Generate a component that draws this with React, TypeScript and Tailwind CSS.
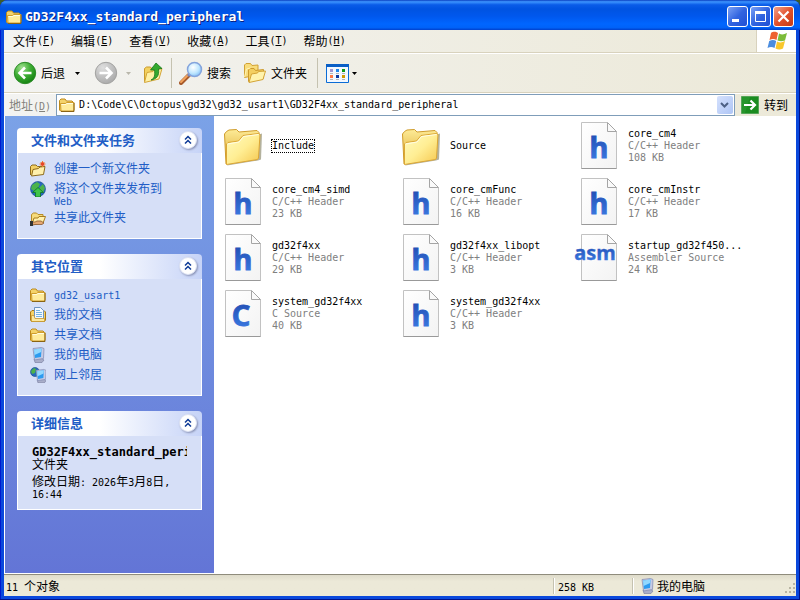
import React, { useState } from 'react';

// Latin runs are set in a 6px wide mono face next to 12px hanzi
const Mixed = ({ text }: { text: string }) => (
  <>
    {text.split(/([\x20-\x7e]+)/).map((part, i) =>
      /^[\x20-\x7e]+$/.test(part) ? (
        <span key={i} className="font-['DejaVu_Sans_Mono',monospace] text-[10px] leading-[0]">{part}</span>
      ) : (
        part
      )
    )}
  </>
);

const SmallFolder = () => (
  <svg viewBox="0 0 16 16" className="h-4 w-4 shrink-0">
    <path d="M.5 13V3.5L2 2h4l1.5 2H13l1.5 1.5V13l-1 1h-12z" fill="#f4d36b" stroke="#bd8a1c" />
    <path d="M1.5 6.5h5l1-1h7.5v7.5l-1 1H2z" fill="#ffec9c" stroke="#cf9d2c" />
    <path d="M2.5 7.5h4.5l1-1h6" stroke="#fffce0" fill="none" />
    <path d="M2 14.5h13V6" stroke="#8a6414" fill="none" />
  </svg>
);

const OpenFolder = () => (
  <>
    <path d="M1.5 13V4.5l2-1.5h3l1.5 1.5h5V8" fill="#f6db7c" stroke="#b68b25" />
    <path d="M2 14.5L4 8h4l1-1.5h6.5L13 13z" fill="#fff0ad" stroke="#a87c1d" />
  </>
);

const NewFolder = () => (
  <svg viewBox="0 0 16 16" className="h-4 w-4 shrink-0">
    <path d="M.5 14V5.500L2 4h4l1.500 1.500h5.500V9" fill="#f3d064" stroke="#8d6a1c" />
    <path d="M1.500 15L3 8.500l5.500-1 1.500-1.500 5-.5-1.500 8z" fill="#fff0ad" stroke="#8d6a1c" />
    <path d="M12.5 0v6M9.5 3h6M10.5 1l4 4M14.5 1l-4 4" stroke="#f08030" />
    <circle cx="12.5" cy="3" r="1.8" fill="#e8452a" />
  </svg>
);

const ShareFolder = () => (
  <svg viewBox="0 0 16 16" className="h-4 w-4 shrink-0">
    <OpenFolder />
    <path d="M1 12h4l2-1h4l3 2-2 1.500H5l-4 1z" fill="#e5a873" stroke="#7d4a20" strokeWidth=".7" />
    <path d="M0 11h3v5H0z" fill="#333" />
  </svg>
);

const Globe = ({ r = 7.5 }: { r?: number }) => (
  <>
    <circle cx={r + 0.5} cy={r + 0.5} r={r} fill="#2768bd" stroke="#174c86" strokeWidth=".6" />
    <path d={r > 6 ? 'M2 4l5-3 3 2-2 4-4 3-3-2zM9 7l4-4 2 4-2 5-3-2z' : 'M1 4l3-3 2 1-1 4-3 1zM6 5l3-2v4l-2 2z'} fill="#4cb34a" />
  </>
);

const PublishIcon = () => (
  <svg viewBox="0 0 16 16" className="h-4 w-4 shrink-0">
    <Globe />
    <path d="M8 6.500l5.500 5h-3V16h-5v-4.500h-3z" fill="#3fc447" stroke="#0d7422" strokeWidth=".8" />
  </svg>
);

const DocsIcon = () => (
  <svg viewBox="0 0 16 16" className="h-4 w-4 shrink-0">
    <path d="M.5 13V5L2 3.500h12l1.500 1.500v8l-1 1.500h-13z" fill="#f6d264" stroke="#a97a18" />
    <path d="M4.500.5h6l3 3V12h-9z" fill="#f4f9ff" stroke="#6b93c4" />
    <path d="M6 3.500h4M6 5.500h6M6 7.500h6M6 9.500h6" stroke="#75b4e4" />
    <path d="M1.500 8.500h2.500l1 3h9.500v3h-13z" fill="#fde9a0" stroke="#c3922a" strokeWidth=".7" />
  </svg>
);

const Monitor = () => (
  <>
    <path d="M4 12l7-1 3 2-2 2.500H5z" fill="#a9aec9" stroke="#72789b" strokeWidth=".6" />
    <path d="M3 1.500L11.500.5l2.500 1-.5 10L4.500 13z" fill="#c5cbe5" stroke="#7e87b0" strokeWidth=".7" />
    <path d="M4 2.500l7.500-1-.5 8.500-6 1z" fill="#2c9bf0" />
    <path d="M4 2.500l7.500-1-.3 3.500L4.500 8z" fill="#92d8ff" />
  </>
);

const ComputerIcon = () => (
  <svg viewBox="0 0 16 16" className="h-4 w-4 shrink-0"><Monitor /></svg>
);

const NetworkIcon = () => (
  <svg viewBox="0 0 16 16" className="h-4 w-4 shrink-0">
    <Globe r={4.5} />
    <g transform="translate(3.500 2) scale(.9)"><Monitor /></g>
  </svg>
);

const LargeFolder = () => (
  <svg viewBox="0 0 48 48" className="h-12 w-12 shrink-0">
    <defs>
      <linearGradient id="folderFront" x1="0" y1="0" x2="1" y2="1">
        <stop offset="0" stopColor="#fffbc0" />
        <stop offset=".5" stopColor="#ffee94" />
        <stop offset="1" stopColor="#f5c64c" />
      </linearGradient>
      <linearGradient id="folderBack" x1="0" y1="0" x2="0" y2="1">
        <stop offset="0" stopColor="#fdeb97" />
        <stop offset="1" stopColor="#dba528" />
      </linearGradient>
    </defs>
    <path d="M8 43.500l31-5 3-1 1-26-3 1z" fill="#77724f" opacity=".55" />
    <path d="M7 42L5.500 12l2-2.500L10 8l7.500-.5L20 10l18-1.500 2 2V20z" fill="url(#folderBack)" stroke="#cf9c2c" />
    <path d="M7.500 42.500V22l1.500-1.500 10.500-1.500 4.500-5.500 15.500-2 1.500 1L39.500 36l-1 1.500z" fill="url(#folderFront)" stroke="#dca734" />
    <path d="M8.500 22l11.500-2 4.500-5.500 15-2" fill="none" stroke="#fffde4" />
  </svg>
);

const PageIcon = ({ letter }: { letter: string }) => (
  <svg viewBox="0 0 48 48" className="h-12 w-12 shrink-0 overflow-visible">
    <defs>
      <linearGradient id="page" x1="0" y1="0" x2="1" y2="1">
        <stop offset="0" stopColor="#fff" />
        <stop offset="1" stopColor="#f3f3f3" />
      </linearGradient>
      <linearGradient id="letter" x1="0" y1="0" x2="0" y2="1">
        <stop offset="0" stopColor="#1c43a8" />
        <stop offset="1" stopColor="#3f82ea" />
      </linearGradient>
    </defs>
    <path d="M6.500.5H32l9.500 9.500v36.500h-35z" fill="url(#page)" stroke="#c2c2c2" />
    <path d="M6.500 46.500h35" stroke="#999" />
    <path d="M32.500.5v9h9z" fill="#fafafa" stroke="#a5a5a5" />
    <text
      x={letter === 'asm' ? 20 : letter === 'h' ? 24 : 22}
      y={letter === 'asm' ? 26 : 36}
      textAnchor="middle"
      fill="url(#letter)"
      stroke="url(#letter)"
      strokeWidth={letter === 'asm' ? 0.3 : 0.8}
      className={letter === 'asm' ? "font-['Noto_Sans',sans-serif] text-[20px] font-bold" : "font-['Noto_Sans',sans-serif] text-[29px] font-bold"}
    >
      {letter}
    </text>
  </svg>
);

const BackIcon = ({ off }: { off?: boolean }) => (
  <svg viewBox="0 0 24 24" className="h-6 w-6 shrink-0">
    <defs>
      <radialGradient id="backOn" cx=".35" cy=".25" r=".8">
        <stop offset="0" stopColor="#9fe08e" />
        <stop offset=".5" stopColor="#3fae35" />
        <stop offset="1" stopColor="#12800f" />
      </radialGradient>
      <radialGradient id="backOff" cx=".35" cy=".25" r=".8">
        <stop offset="0" stopColor="#dedede" />
        <stop offset="1" stopColor="#a9a9a9" />
      </radialGradient>
    </defs>
    <circle cx="12" cy="12" r="10.7" fill={off ? 'url(#backOff)' : 'url(#backOn)'} stroke={off ? '#a2a2a0' : '#2b8a26'} />
    <path
      d={off ? 'M5.500 12H17M12 6.500l5.500 5.500-5.500 5.500' : 'M18.500 12H7M12 6.500L6.500 12l5.500 5.500'}
      fill="none"
      stroke="#fff"
      strokeWidth="2.600"
    />
  </svg>
);

const UpIcon = () => (
  <svg viewBox="0 0 20 24" className="h-6 w-5 shrink-0">
    <path d="M1.500 20.500V7.500l2-1.500h4l1.500 2 7-1v10z" fill="#f3d15f" stroke="#c99b2d" />
    <path d="M1.500 21.500l2.500-10 6-1 1-2 8-1-3 10.500z" fill="#fff1a5" stroke="#d4a63a" />
    <path d="M8 19c4-2 4-5 3.500-10H7.500L13 2l6 5.500-3.500.5c1 7-2 10-7.500 11z" fill="#34a92f" stroke="#16771a" strokeWidth=".8" />
  </svg>
);

const SearchIcon = () => (
  <svg viewBox="0 0 24 24" className="h-6 w-6 shrink-0">
    <defs>
      <radialGradient id="lens" cx=".4" cy=".35" r=".7">
        <stop offset="0" stopColor="#fff" />
        <stop offset=".6" stopColor="#bfe7ff" />
        <stop offset="1" stopColor="#7dbdf5" />
      </radialGradient>
    </defs>
    <path d="M2 22l8-8" stroke="#a65a2b" strokeWidth="4" strokeLinecap="round" />
    <path d="M2 21l7-7" stroke="#f2a35e" strokeWidth="2" strokeLinecap="round" />
    <path d="M9 15l2-2" stroke="#7a87b8" strokeWidth="3" />
    <circle cx="15.500" cy="8.500" r="7" fill="url(#lens)" stroke="#85a4dc" strokeWidth="1.500" />
  </svg>
);

const FoldersIcon = () => (
  <svg viewBox="0 0 24 24" className="h-6 w-6 shrink-0">
    <path d="M1.500 16.500V4l1.500-1.500h4.500l1.500 2 6-.5v10z" fill="#f8dc7c" stroke="#d2a235" />
    <path d="M5.500 20.500V9L7 7.500h4l1.500 2 8-1v9z" fill="#f3cf60" stroke="#cd9a2d" />
    <path d="M6 21.500l2.500-8.500 6-1 1-1.500 7-.5-2.500 8.500z" fill="#fff3ac" stroke="#d4a436" />
    <path d="M1.500 16l2-8 4-1" fill="none" stroke="#fff4b6" />
  </svg>
);

const ViewsIcon = () => (
  <svg viewBox="0 0 23 19" className="h-[19px] w-[23px] shrink-0">
    <path d="M.5.5h22v18H.5z" fill="#f3f8ff" stroke="#0a6cd6" />
    <path d="M0 0h23v3H0z" fill="#0a5fc6" />
    <path d="M4 5h3v3H4z" fill="#a096d0" />
    <path d="M10 5h3v3h-3z" fill="#1d86ea" />
    <path d="M16 5h3v3h-3z" fill="#109a18" />
    <path d="M4 11h3v3H4z" fill="#ff7844" />
    <path d="M10 11h3v3h-3z" fill="#0a379e" />
    <path d="M16 11h3v3h-3z" fill="#d29a00" />
    <path d="M4 9.500h3m3 0h3m3 0h3M4 15.500h3m3 0h3m3 0h3" stroke="#b3b3b8" />
  </svg>
);

const FlagIcon = () => (
  <svg viewBox="0 0 20 20" className="h-5 w-5">
    <path d="M4 2c3-2 5-1 7 0L9.500 9c-2-1-4-1.500-7 0z" fill="#ee6030" />
    <path d="M12 2.500c3 1.500 5 1 8-.5l-2 7.500c-3 1-5 1-7.500 0z" fill="#7cbc3a" />
    <path d="M2.200 10c3-1.500 5-1 7 0L7.500 17c-2-1-4-1.500-7 0z" fill="#4b8de0" />
    <path d="M10 10.500c3 1.500 5 1 8-.5l-2 7.500c-3 1.500-5 1-7.500 0z" fill="#f9c72c" />
  </svg>
);

const DownArrow = ({ className }: { className: string }) => (
  <svg viewBox="0 0 5 3" className={`h-[3px] w-[5px] shrink-0 ${className}`}>
    <path d="M0 0h5L2.500 3z" fill="currentColor" />
  </svg>
);

const Separator = () => <div className="my-1 w-px self-stretch bg-[#c5c2b0]" />;

type PanelProps = { title: string; children: React.ReactNode };

const Panel = ({ title, children }: PanelProps) => {
  const [open, setOpen] = useState(true);
  return (
    <section>
      <div className="flex h-[25px] items-center justify-between rounded-t-[4px] bg-linear-to-r from-white from-45% to-[#c6d3f7] pr-[5px] pb-0.5 pl-3.5">
        <h2 className="text-[13px] font-bold text-[#215dc6]">{title}</h2>
        <button
          type="button"
          aria-label={title}
          onClick={() => setOpen(!open)}
          className="flex h-[18px] w-[18px] items-center justify-center rounded-full border border-[#dbe1f3] bg-white shadow-[1px_1px_2px_#8a93b5]"
        >
          <svg viewBox="0 0 8 10" className="h-2.5 w-2">
            <path d="M1 4.500l3-3 3 3M1 8.500l3-3 3 3" fill="none" stroke="#0e3a96" strokeWidth="1.500" />
          </svg>
        </button>
      </div>
      {open && <div className="border border-t-0 border-white bg-[#d6dff7]">{children}</div>}
    </section>
  );
};

type Link = { label: string; icon: React.ReactNode };

const LinkList = ({ links }: { links: Link[] }) => (
  <ul className="flex flex-col gap-1 px-3 pt-2 pb-3">
    {links.map(({ label, icon }) => (
      <li key={label}>
        <a href="#" className="flex min-h-4 items-start gap-2 text-[#215dc6]">
          <span className="h-4">{icon}</span>
          <span className="max-w-[110px] pt-px leading-3">
            <Mixed text={label} />
          </span>
        </a>
      </li>
    ))}
  </ul>
);

const menus = [
  ['文件', 'F'],
  ['编辑', 'E'],
  ['查看', 'V'],
  ['收藏', 'A'],
  ['工具', 'T'],
  ['帮助', 'H'],
];

const tasks: Link[] = [
  { label: '创建一个新文件夹', icon: <NewFolder /> },
  { label: '将这个文件夹发布到 Web', icon: <PublishIcon /> },
  { label: '共享此文件夹', icon: <ShareFolder /> },
];

const places: Link[] = [
  { label: 'gd32_usart1', icon: <SmallFolder /> },
  { label: '我的文档', icon: <DocsIcon /> },
  { label: '共享文档', icon: <SmallFolder /> },
  { label: '我的电脑', icon: <ComputerIcon /> },
  { label: '网上邻居', icon: <NetworkIcon /> },
];

const files = [
  { name: 'Include' },
  { name: 'Source' },
  { name: 'core_cm4', icon: 'h', type: 'C/C++ Header', size: '108 KB' },
  { name: 'core_cm4_simd', icon: 'h', type: 'C/C++ Header', size: '23 KB' },
  { name: 'core_cmFunc', icon: 'h', type: 'C/C++ Header', size: '16 KB' },
  { name: 'core_cmInstr', icon: 'h', type: 'C/C++ Header', size: '17 KB' },
  { name: 'gd32f4xx', icon: 'h', type: 'C/C++ Header', size: '29 KB' },
  { name: 'gd32f4xx_libopt', icon: 'h', type: 'C/C++ Header', size: '3 KB' },
  { name: 'startup_gd32f450...', icon: 'asm', type: 'Assembler Source', size: '24 KB' },
  { name: 'system_gd32f4xx', icon: 'C', type: 'C Source', size: '40 KB' },
  { name: 'system_gd32f4xx', icon: 'h', type: 'C/C++ Header', size: '3 KB' },
];

const TitleBar = () => (
  <header className="flex h-[30px] items-center bg-[linear-gradient(#0a3fc0_0%,#3d95ff_6%,#0a5ce8_16%,#0053e1_30%,#0058ee_55%,#0066ff_80%,#0062f8_92%,#0040cc_100%)] pt-[3px] pr-1.5 pl-1.5">
    <SmallFolder />
    <h1 className="ml-[3px] flex-1 truncate font-['DejaVu_Sans_Mono',monospace] text-[13px] font-bold text-white [text-shadow:1px_1px_#0a1f80]">
      GD32F4xx_standard_peripheral
    </h1>
    <div className="flex gap-0.5">
      <button type="button" aria-label="最小化" className="h-[21px] w-[21px] rounded-[3px] border border-white bg-linear-to-br from-[#7ba0f5] via-[#3264e0] to-[#1f4fd4]">
        <svg viewBox="0 0 19 19"><path d="M4 12h7v3H4z" fill="#fff" /></svg>
      </button>
      <button type="button" aria-label="最大化" className="h-[21px] w-[21px] rounded-[3px] border border-white bg-linear-to-br from-[#7ba0f5] via-[#3264e0] to-[#1f4fd4]">
        <svg viewBox="0 0 19 19"><path d="M4.500 5.500h10v9h-10z" fill="none" stroke="#fff" /><path d="M4 4h11v3H4z" fill="#fff" /></svg>
      </button>
      <button type="button" aria-label="关闭" className="h-[21px] w-[21px] rounded-[3px] border border-white bg-linear-to-br from-[#f0a088] via-[#e2512c] to-[#c63a14]">
        <svg viewBox="0 0 19 19"><path d="M4.500 4.500l10 10M14.500 4.500l-10 10" stroke="#fff" strokeWidth="2.200" /></svg>
      </button>
    </div>
  </header>
);

const App = () => {
  const [address, setAddress] = useState('D:\\Code\\C\\Octopus\\gd32\\gd32_usart1\\GD32F4xx_standard_peripheral');

  return (
    <div className="min-h-screen bg-[#3d5c2c]">
      <div className="flex min-h-screen flex-col overflow-hidden rounded-t-lg bg-[#0a48dc] font-['Noto_Sans_CJK_SC',sans-serif] text-xs text-black shadow-[inset_-1px_-1px_#00138c,inset_1px_0_#0019cf]">
        <TitleBar />
        <div className="mx-1 mb-1 flex flex-1 flex-col bg-[#ece9d8]">
          <div className="bg-linear-to-r from-[#f3f3f1] to-[#ece9d8]">
            <nav className="flex h-[23px] border-b border-[#d8d2bd] pl-px">
              {menus.map(([label, key]) => (
                <button key={key} type="button" className="flex items-center px-2">
                  {label}
                  <span className="font-['DejaVu_Sans_Mono',monospace] text-[10px]">
                    (<u>{key}</u>)
                  </span>
                </button>
              ))}
              <div className="ml-auto flex w-10 items-center justify-center border-l border-[#d8d2bd] bg-white">
                <FlagIcon />
              </div>
            </nav>

            <div className="flex h-10 items-center border-t border-b border-t-white border-b-[#d8d2bd] pl-[9px]">
              <button type="button" className="flex items-center gap-1">
                <BackIcon />
                后退
              </button>
              <DownArrow className="mr-3.5 ml-2.5" />
              <button type="button" aria-label="前进" disabled>
                <BackIcon off />
              </button>
              <DownArrow className="mr-3 ml-2 text-[#b9b7ab]" />
              <button type="button" aria-label="向上" className="mr-2">
                <UpIcon />
              </button>
              <Separator />
              <button type="button" className="ml-[7px] flex items-center gap-1">
                <SearchIcon />
                搜索
              </button>
              <button type="button" className="mr-2.5 ml-3 flex items-center gap-1">
                <FoldersIcon />
                文件夹
              </button>
              <Separator />
              <button type="button" aria-label="查看" className="ml-2 flex items-center gap-[3px]">
                <ViewsIcon />
                <DownArrow className="" />
              </button>
            </div>

            <div className="flex h-[23px] items-center border-t border-white pl-[5px]">
              <label htmlFor="address" className="mr-[5px] text-[#83827b]">
                地址
                <span className="font-['DejaVu_Sans_Mono',monospace] text-[10px]">
                  (<u>D</u>)
                </span>
              </label>
              <div className="flex h-[22px] flex-1 items-center border border-[#7f9db9] bg-white pl-0.5">
                <SmallFolder />
                <input
                  id="address"
                  value={address}
                  onChange={(e) => setAddress(e.target.value)}
                  className="ml-1 min-w-0 flex-1 font-['DejaVu_Sans_Mono',monospace] text-[10px] outline-none"
                />
                <button type="button" aria-label="地址列表" className="mr-px flex h-[18px] w-4 items-center justify-center rounded-[2px] bg-linear-to-br from-[#d5e1fd] to-[#aec5f5]">
                  <svg viewBox="0 0 9 6" className="h-1.5 w-[9px]">
                    <path d="M1 1l3.500 3.500L8 1" fill="none" stroke="#4d6185" strokeWidth="2" />
                  </svg>
                </button>
              </div>
              <button type="button" className="mr-2 ml-1.5 flex items-center gap-[5px]">
                <svg viewBox="0 0 18 18" className="h-[18px] w-[18px]">
                  <path d="M.5.5h17v17H.5z" fill="#26952b" stroke="#54a457" />
                  <path d="M9 1h8v16H4z" fill="#108315" opacity=".5" />
                  <path d="M3 9h11M9.500 4.500L14 9l-4.500 4.500" fill="none" stroke="#fff" strokeWidth="2.200" />
                </svg>
                转到
              </button>
            </div>
          </div>

          <div className="flex flex-1 border-b border-l border-white bg-white">
            <aside className="flex w-[209px] shrink-0 flex-col gap-[15px] bg-linear-to-b from-[#7ba2e7] to-[#6375d6] px-3 py-3">
              <Panel title="文件和文件夹任务">
                <LinkList links={tasks} />
              </Panel>
              <Panel title="其它位置">
                <LinkList links={places} />
              </Panel>
              <Panel title="详细信息">
                <div className="px-3.5 pt-2.5 pb-2.5 leading-3">
                  <p className="overflow-x-clip font-['DejaVu_Sans_Mono',monospace] font-bold">GD32F4xx_standard_peripheral</p>
                  <p>文件夹</p>
                  <p className="mt-[5px]">
                    <Mixed text="修改日期: 2026年3月8日, 16:44" />
                  </p>
                </div>
              </Panel>
            </aside>

            <main className="grid flex-1 grid-cols-[repeat(auto-fill,178px)] content-start pt-0.5 pl-[5px]">
              {files.map((file, i) => (
                <button key={i} type="button" className="flex h-14 items-center gap-[5px] text-left font-['DejaVu_Sans_Mono',monospace] text-[10px] leading-3">
                  {file.icon ? <PageIcon letter={file.icon} /> : <LargeFolder />}
                  <span className="flex flex-col items-start whitespace-nowrap">
                    <span className={i === 0 ? 'outline-1 outline-black outline-dotted' : ''}>{file.name}</span>
                    {file.type && <span className="text-[#808080]">{file.type}</span>}
                    {file.size && <span className="text-[#808080]">{file.size}</span>}
                  </span>
                </button>
              ))}
            </main>
          </div>

          <footer className="flex h-[22px] items-center border-t border-[#8f8c7c] bg-linear-to-b from-[#dedbca] to-[#ece9d8] to-30%">
            <div className="flex-1 pl-0.5">
              <Mixed text="11 个对象" />
            </div>
            <div className="w-[79px] border-l border-[#c5c2b0] pl-1 shadow-[inset_1px_0_#fff]">
              <Mixed text="258 KB" />
            </div>
            <div className="flex w-[164px] items-center border-l border-[#c5c2b0] pl-1.5 shadow-[inset_1px_0_#fff]">
              <ComputerIcon />
              <span className="ml-0.5 flex-1">我的电脑</span>
              <svg viewBox="0 0 12 12" className="h-3 w-3 self-end">
                <path d="M9 1h2v2H9zM5 5h2v2H5zM9 5h2v2H9zM1 9h2v2H1zM5 9h2v2H5zM9 9h2v2H9z" fill="#b8b4a2" />
              </svg>
            </div>
          </footer>
        </div>
      </div>
    </div>
  );
};

export default App;
